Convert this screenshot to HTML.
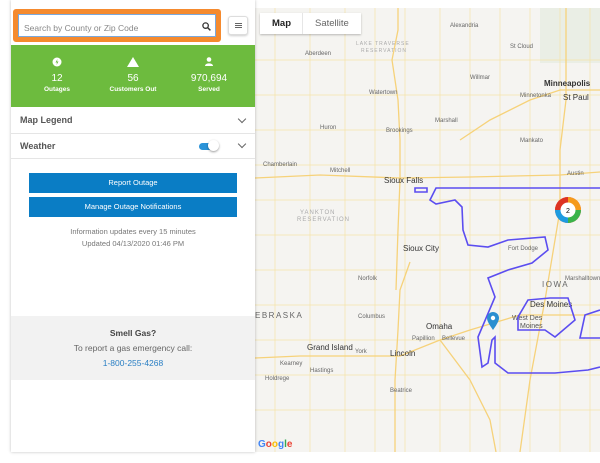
<!DOCTYPE html>
<html><head><meta charset="utf-8"><style>
*{box-sizing:border-box;margin:0;padding:0}
body{width:600px;height:463px;background:#fff;font-family:"Liberation Sans",Arial,sans-serif;position:relative;overflow:hidden}
#map{position:absolute;left:255px;top:8px;width:345px;height:444px;background:#f5f4f1;overflow:hidden}
#panel{position:absolute;left:11px;top:0;width:244px;height:452px;background:#fff;box-shadow:0 0 3px rgba(0,0,0,.25)}
.search{position:absolute;left:2px;top:9px;width:208px;height:33px;border:3px solid #f58a2e;border-radius:3px;background:#f58a2e}
.search .in{position:absolute;left:2px;top:2px;right:2px;bottom:2px;background:#fff;border:1px solid #7aa8dc;font-size:8.5px;color:#888;padding:8px 0 0 5px}
.lb{position:absolute;left:217px;top:16px;width:20px;height:19px;border:1px solid #ddd;border-radius:3px;background:#fff;box-shadow:0 1px 2px rgba(0,0,0,.2)}
.green{position:absolute;left:0;top:45px;width:244px;height:62px;background:#6dbb3e;color:#fff}
.st{position:absolute;top:0;width:80px;text-align:center}
.st .n{position:absolute;top:28px;width:100%;font-size:10px}
.st .l{position:absolute;top:41px;width:100%;font-size:6.5px;font-weight:bold}
.row{position:absolute;left:0;width:244px;border-bottom:1px solid #e5e5e5;font-size:9px;font-weight:bold;color:#555;padding-left:9px}
.chev{position:absolute;right:10px;width:6px;height:6px;border-right:1.5px solid #666;border-bottom:1.5px solid #666;transform:rotate(45deg)}
.btn{position:absolute;left:18px;width:208px;height:20px;background:#0a7dc5;color:#fff;font-size:7.5px;text-align:center;line-height:20px}
.info{position:absolute;left:0;width:244px;text-align:center;font-size:7.5px;color:#777}
.gas{position:absolute;left:0;top:316px;width:244px;height:64px;background:#f2f2f2;text-align:center}
</style></head><body>
<div id="map">
<svg width="345" height="444" viewBox="255 8 345 444" xmlns="http://www.w3.org/2000/svg" font-family="Liberation Sans, Arial, sans-serif">
<rect x="255" y="8" width="345" height="444" fill="#f5f4f1"/>
<rect x="540" y="8" width="60" height="55" fill="#eaeee5"/>
<g stroke="#f5e3a8" stroke-width="0.7" fill="none">
<path d="M255 60H600M255 95H600M255 130H600M255 165H600M255 200H600M255 235H600M255 270H600M255 305H600M255 340H600M255 375H600M255 410H600"/>
<path d="M275 8V452M310 8V452M345 8V452M375 8V452M405 8V452M440 8V452M470 8V452M500 8V452M530 8V452M560 8V452M590 8V452"/>
</g>
<g stroke="#f6d27a" stroke-width="1.3" fill="none">
<path d="M398 8V30L392 60L398 100L400 140L400 180L398 230L396 290"/>
<path d="M255 178L320 175L400 178L470 177L560 175L600 172"/>
<path d="M600 90L560 90L530 100L490 120L460 140"/>
<path d="M410 262L400 290L398 330L395 380L395 452"/>
<path d="M255 358L300 356L400 356L440 340L470 330L520 315L600 315"/>
<path d="M566 8V100L560 150L560 210L545 300L530 380L520 452"/>
<path d="M440 340L470 380L490 420L496 452"/>
</g>
<g font-size="6" fill="#666">
<text x="356" y="45" fill="#aaa" font-size="5" letter-spacing="1">LAKE TRAVERSE</text>
<text x="361" y="52" fill="#aaa" font-size="5" letter-spacing="1">RESERVATION</text>
<text x="450" y="27">Alexandria</text><text x="510" y="48">St Cloud</text>
<text x="305" y="55">Aberdeen</text><text x="470" y="79">Willmar</text>
<text x="369" y="94">Watertown</text><text x="520" y="97">Minnetonka</text>
<text x="320" y="129">Huron</text><text x="386" y="132">Brookings</text><text x="435" y="122">Marshall</text>
<text x="520" y="142">Mankato</text><text x="263" y="166">Chamberlain</text><text x="330" y="172">Mitchell</text>
<text x="567" y="175">Austin</text><text x="300" y="214" fill="#aaa" letter-spacing="1">YANKTON</text>
<text x="297" y="221" fill="#aaa" letter-spacing="1">RESERVATION</text>
<text x="508" y="250">Fort Dodge</text><text x="358" y="280">Norfolk</text>
<text x="565" y="280">Marshalltown</text><text x="358" y="318">Columbus</text>
<text x="512" y="320" font-size="7" fill="#555">West Des</text><text x="520" y="328" font-size="7" fill="#555">Moines</text>
<text x="412" y="340">Papillion</text><text x="442" y="340">Bellevue</text>
<text x="355" y="353">York</text><text x="280" y="365">Kearney</text><text x="310" y="372">Hastings</text>
<text x="265" y="380">Holdrege</text><text x="390" y="392">Beatrice</text>
</g>
<g font-size="8" fill="#333">
<text x="544" y="86" font-weight="bold">Minneapolis</text><text x="563" y="100">St Paul</text>
<text x="384" y="183">Sioux Falls</text><text x="403" y="251">Sioux City</text>
<text x="426" y="329">Omaha</text><text x="390" y="356">Lincoln</text><text x="307" y="350">Grand Island</text>
<text x="530" y="307">Des Moines</text>
<text x="542" y="287" fill="#666" letter-spacing="1.5">IOWA</text>
<text x="255" y="318" fill="#666" letter-spacing="1.5">EBRASKA</text>
</g>
<g fill="none" stroke="#5b4df0" stroke-width="1.6">
<path d="M415 188H427V192H415Z"/>
<path d="M600 188H436L430 200L436 204L455 200L462 207L463 230L468 245L488 247L508 240L545 237L548 250L532 263L508 270L488 278L495 297L478 337L482 367L488 363L492 340L495 337L495 363L508 373L555 373L588 370L600 367"/>
<path d="M528 300L550 298L568 298L575 320L555 337L545 330L518 330L518 317Z"/>
<path d="M600 310L585 315L580 338L600 338"/>
</g>
<circle cx="568" cy="210" r="13" fill="#e53" /><path d="M568 197A13 13 0 0 1 581 210H568Z" fill="#f59b1c"/><path d="M581 210A13 13 0 0 1 568 223V210Z" fill="#3ab34a"/><path d="M568 223A13 13 0 0 1 555 210H568Z" fill="#1e9be0"/><path d="M555 210A13 13 0 0 1 568 197V210Z" fill="#d32"/>
<circle cx="568" cy="210" r="7.5" fill="#fff"/><text x="566" y="213" font-size="7" fill="#000">2</text>
<path d="M493 330C488 323 487 320 487 318A6 6 0 0 1 499 318C499 320 498 323 493 330Z" fill="#2b8fd0"/><circle cx="493" cy="318" r="2.2" fill="#fff"/>
<text x="258" y="447" font-size="10" font-weight="bold"><tspan fill="#4285f4">G</tspan><tspan fill="#ea4335">o</tspan><tspan fill="#fbbc05">o</tspan><tspan fill="#4285f4">g</tspan><tspan fill="#34a853">l</tspan><tspan fill="#ea4335">e</tspan></text>
</svg>
<div style="position:absolute;left:5px;top:5px;width:101px;height:21px;background:#fff;box-shadow:0 1px 2px rgba(0,0,0,.25);font-size:9.5px">
<span style="position:absolute;left:12px;top:5px;font-weight:bold;color:#222">Map</span>
<span style="position:absolute;left:42px;top:0;width:1px;height:21px;background:#e6e6e6"></span>
<span style="position:absolute;left:55px;top:5px;color:#666">Satellite</span></div>
</div>
<div id="panel">
<div class="search"><div class="in">Search by County or Zip Code
<svg style="position:absolute;right:4px;top:7px" width="9" height="9" viewBox="0 0 9 9"><circle cx="3.6" cy="3.6" r="2.7" fill="none" stroke="#333" stroke-width="1.3"/><path d="M5.6 5.6L8.4 8.4" stroke="#333" stroke-width="1.5"/></svg></div></div>
<div class="lb"><svg width="18" height="17" viewBox="0 0 18 17"><path d="M6 6.5H13M6 8.5H13M6 10.5H13" stroke="#666" stroke-width="1.1"/></svg></div>
<div class="green">
<div class="st" style="left:6px"><svg style="position:absolute;left:35px;top:12px" width="10" height="10"><circle cx="5" cy="5" r="4.5" fill="#fff"/><path d="M5.5 2L3.5 5.5H5L4.5 8L6.5 4.5H5Z" fill="#6dbb3e"/></svg><div class="n">12</div><div class="l">Outages</div></div>
<div class="st" style="left:82px"><svg style="position:absolute;left:34px;top:12px" width="12" height="10"><path d="M6 0L12 10H0Z" fill="#fff"/></svg><div class="n">56</div><div class="l">Customers Out</div></div>
<div class="st" style="left:158px"><svg style="position:absolute;left:36px;top:12px" width="8" height="9"><circle cx="4" cy="2.5" r="2.3" fill="#fff"/><path d="M0 9C0 5.5 8 5.5 8 9Z" fill="#fff"/></svg><div class="n">970,694</div><div class="l">Served</div></div>
</div>
<div class="row" style="top:107px;height:27px;line-height:27px">Map Legend<span class="chev" style="top:9px"></span></div>
<div class="row" style="top:134px;height:25px;line-height:24px">Weather
<span style="position:absolute;left:188px;top:9px;width:16px;height:7px;border-radius:4px;background:#2a93d8"></span>
<span style="position:absolute;left:197px;top:6px;width:11px;height:11px;border-radius:50%;background:#fff;box-shadow:0 1px 2px rgba(0,0,0,.4)"></span>
<span class="chev" style="top:7px"></span></div>
<div class="btn" style="top:173px">Report Outage</div>
<div class="btn" style="top:197px">Manage Outage Notifications</div>
<div class="info" style="top:227px">Information updates every 15 minutes</div>
<div class="info" style="top:239px">Updated 04/13/2020 01:46 PM</div>
<div class="gas">
<div style="position:absolute;top:12px;width:100%;font-size:8.5px;font-weight:bold;color:#444">Smell Gas?</div>
<div style="position:absolute;top:27px;width:100%;font-size:8.5px;color:#666">To report a gas emergency call:</div>
<div style="position:absolute;top:42px;width:100%;font-size:8.5px;color:#2a7fc4">1-800-255-4268</div>
</div>
</div>
</body></html>
